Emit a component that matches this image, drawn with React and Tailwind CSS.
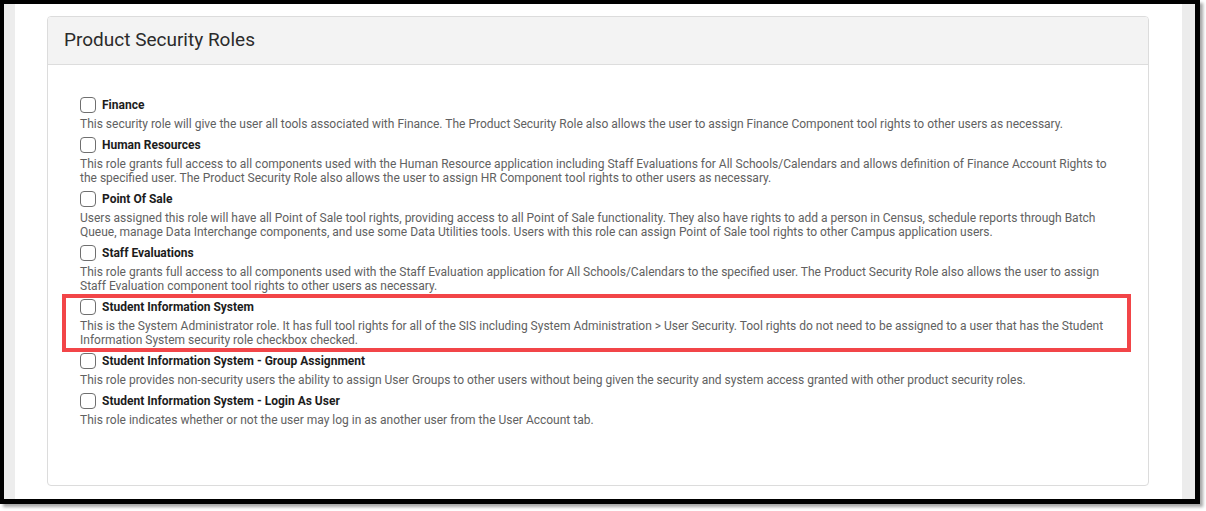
import React from 'react';

const roles = [
  {
    name: 'Finance',
    desc: 'This security role will give the user all tools associated with Finance. The Product Security Role also allows the user to assign Finance Component tool rights to other users as necessary.',
  },
  {
    name: 'Human Resources',
    desc: 'This role grants full access to all components used with the Human Resource application including Staff Evaluations for All Schools/Calendars and allows definition of Finance Account Rights to the specified user. The Product Security Role also allows the user to assign HR Component tool rights to other users as necessary.',
  },
  {
    name: 'Point Of Sale',
    desc: 'Users assigned this role will have all Point of Sale tool rights, providing access to all Point of Sale functionality. They also have rights to add a person in Census, schedule reports through Batch Queue, manage Data Interchange components, and use some Data Utilities tools. Users with this role can assign Point of Sale tool rights to other Campus application users.',
  },
  {
    name: 'Staff Evaluations',
    desc: 'This role grants full access to all components used with the Staff Evaluation application for All Schools/Calendars to the specified user. The Product Security Role also allows the user to assign Staff Evaluation component tool rights to other users as necessary.',
  },
  {
    name: 'Student Information System',
    desc: 'This is the System Administrator role. It has full tool rights for all of the SIS including System Administration > User Security. Tool rights do not need to be assigned to a user that has the Student Information System security role checkbox checked.',
    highlight: true,
  },
  {
    name: 'Student Information System - Group Assignment',
    desc: 'This role provides non-security users the ability to assign User Groups to other users without being given the security and system access granted with other product security roles.',
  },
  {
    name: 'Student Information System - Login As User',
    desc: 'This role indicates whether or not the user may log in as another user from the User Account tab.',
  },
];

function RoleItem({ role }) {
  return (
    <div className="relative mb-1">
      {/* annotation box */}
      {role.highlight && (
        <span className="absolute -left-[18px] -top-[3px] -right-[15px] -bottom-[5px] border-4 border-[#f24548] pointer-events-none" />
      )}
      <label className="flex items-center gap-[6px] h-5">
        <span className="w-4 h-4 rounded-[4px] border border-[#6f6f6f] bg-white shrink-0" />
        <span className="text-[12px] font-bold text-[#1c1c1c]">{role.name}</span>
      </label>
      <p className="mt-[2px] text-[12px] leading-[14px] text-[#616161]">{role.desc}</p>
    </div>
  );
}

export default function App() {
  return (
    <div className="w-[1206px] h-[511px] bg-white" style={{ fontFamily: 'Roboto, "Liberation Sans", sans-serif' }}>
      <div className="w-[1200px] h-[504px] border-t-4 border-l-4 border-r-[5px] border-b-[5px] border-black shadow-[3px_3px_3px_rgba(0,0,0,0.35)] flex">
        <div className="w-[11px] bg-[#ededed] shrink-0" />
        <div className="flex-1 bg-white pt-3 pl-[32px] pr-[33px] pb-[13px]">
          <div className="h-full rounded-[4px] border border-[#dcdcdc] overflow-hidden flex flex-col">
            {/* 1. Header */}
            <div className="h-12 bg-[#f3f3f3] border-b border-[#dddddd] flex items-center px-4 shrink-0">
              <h2 className="text-[19px] text-[#2b2b2b]">Product Security Roles</h2>
            </div>

            {/* 2. Role list */}
            <div className="flex-1 pt-[30px] px-8">
              {roles.map(role => (
                <RoleItem key={role.name} role={role} />
              ))}
            </div>
          </div>
        </div>
        <div className="w-[13px] bg-[#ececec] shrink-0" />
      </div>
    </div>
  );
}
